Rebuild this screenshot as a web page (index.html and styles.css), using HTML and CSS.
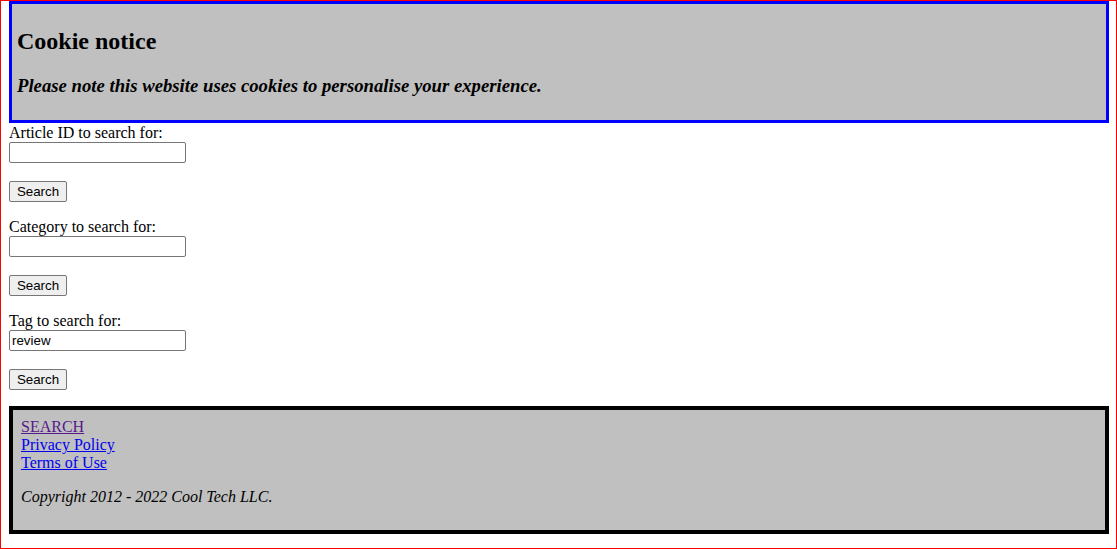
FILE: index.html
```html
<!DOCTYPE html>
<html lang="en">
<head>
<meta charset="utf-8">
<title>Search</title>
<link rel="stylesheet" href="styles.css">
</head>
<body>
<div class="page">
  <header class="cookie-notice">
    <h2 class="cookie-title">Cookie notice</h2>
    <h3 class="cookie-text">Please note this website uses cookies to personalise your experience.</h3>
  </header>
  <main class="searches">
    <form class="search-form">
      <label class="search-label" for="article">Article ID to search for:</label>
      <input class="search-input" type="text" id="article">
      <button class="search-button" type="button">Search</button>
    </form>
    <form class="search-form">
      <label class="search-label" for="category">Category to search for:</label>
      <input class="search-input" type="text" id="category">
      <button class="search-button" type="button">Search</button>
    </form>
    <form class="search-form">
      <label class="search-label" for="tag">Tag to search for:</label>
      <input class="search-input" type="text" id="tag" value="review">
      <button class="search-button" type="button">Search</button>
    </form>
  </main>
  <footer class="site-footer">
    <nav class="footer-links">
      <a class="footer-link visited" href="#search">SEARCH</a>
      <a class="footer-link" href="#privacy">Privacy Policy</a>
      <a class="footer-link" href="#terms">Terms of Use</a>
    </nav>
    <p class="copyright">Copyright 2012 - 2022 Cool Tech LLC.</p>
  </footer>
</div>
</body>
</html>
```
FILE: styles.css
```css
html, body {
  margin: 0;
  padding: 0;
  background: #ffffff;
}

body {
  font-family: "Liberation Serif", "Times New Roman", serif;
  font-size: 16px;
  color: #000000;
}

.page {
  box-sizing: border-box;
  width: 1117px;
  height: 549px;
  border: 1px solid #ff0000;
  padding: 0 7px 0 8px;
  display: flex;
  flex-direction: column;
}

.cookie-notice {
  background: #c0c0c0;
  border: 3px solid #0000ff;
  padding: 4px 5px;
}

.cookie-title {
  font-size: 24px;
  font-weight: bold;
  margin: 20px 0;
  line-height: 27px;
}

.cookie-text {
  font-size: 18.72px;
  font-weight: bold;
  font-style: italic;
  margin: 20px 0 20px;
  line-height: 21px;
}

.searches {
  display: flex;
  flex-direction: column;
  gap: 15px;
  margin-bottom: 16px;
}

.search-form {
  display: flex;
  flex-direction: column;
  align-items: flex-start;
  margin: 0;
}

.search-label {
  display: block;
  line-height: 19px;
  height: 19px;
}

.search-input {
  box-sizing: border-box;
  width: 177px;
  height: 21px;
  margin: 0;
  padding: 1px 2px;
  border: 1px solid #767676;
  border-radius: 2px;
  background: #ffffff;
  font-family: "Liberation Sans", Arial, sans-serif;
  font-size: 13.33px;
  color: #000000;
}

.search-button {
  box-sizing: border-box;
  margin-top: 18px;
  width: 58px;
  height: 21px;
  padding: 0 6px;
  border: 1px solid #767676;
  border-radius: 2px;
  background: #efefef;
  font-family: "Liberation Sans", Arial, sans-serif;
  font-size: 13.33px;
  color: #000000;
  line-height: 17px;
}

.site-footer {
  background: #c0c0c0;
  border: 4px solid #000000;
  padding: 8px;
}

.footer-links {
  display: flex;
  flex-direction: column;
  align-items: flex-start;
}

.footer-link {
  line-height: 18px;
  color: #0000ee;
  text-decoration: underline;
}

.footer-link.visited {
  color: #551a8b;
}

.copyright {
  font-style: italic;
  margin: 16px 0;
  line-height: 18px;
}
```
